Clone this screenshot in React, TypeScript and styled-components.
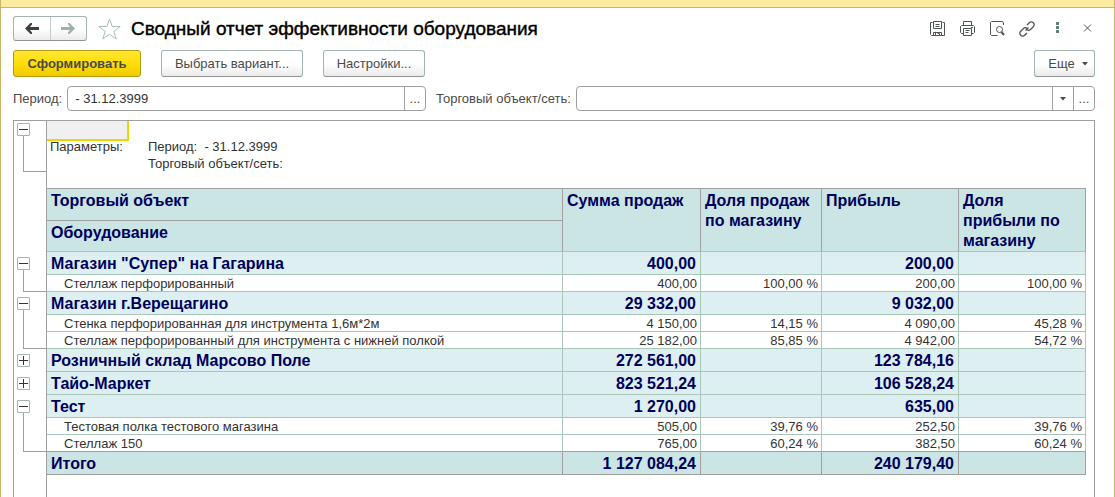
import React from "react";
import styled, { createGlobalStyle, css } from "styled-components";

const line = "#a0a0a0";
const grid = "#a9c6bb";
const ROW = { group: 23, item: 17 };

const GlobalStyle = createGlobalStyle`
  *, *::after { box-sizing: border-box; }
  body { margin: 0; background: #fff; }
  body, button, input, table { font-family: "Liberation Sans", Arial, sans-serif; font-size: 13px; color: #4a4a4a; }
  button { cursor: pointer; }
`;

const Frame = styled.div`
  min-height: 100vh;
  display: flex;
  flex-direction: column;
  border: solid #c8b668;
  border-width: 0 1px;
`;

const Strip = styled.div`
  height: 8px;
  background: #fdeb9f;
  border-bottom: 1px solid #c8b668;
`;

const Content = styled.main`
  flex: 1;
  display: flex;
  flex-direction: column;
  padding: 8px 19px 0 12px;
`;

const TitleBar = styled.header`
  display: flex;
  align-items: center;
  height: 25px;
`;

const face = css`
  background: linear-gradient(#fff 50%, #ebebeb);
  border: 1px solid #a3b5b0;
  border-bottom-color: #929292;
  border-radius: 3px;
`;

const History = styled.div`
  ${face}
  display: flex;
  width: 74px;
  height: 25px;
`;

const HistoryButton = styled.button`
  flex: 1;
  display: grid;
  place-items: center;
  padding: 0;
  border: 0;
  background: none;
  & + & { border-left: 1px solid #c3cdca; }
`;

const Star = styled.button`
  display: grid;
  margin-left: 10px;
  padding: 0;
  border: 0;
  background: none;
`;

const Title = styled.h1`
  flex: 1;
  margin: 0 0 0 9px;
  font-size: 19px;
  font-weight: 400;
  line-height: 24px;
  color: #000;
  -webkit-text-stroke: 0.4px #000;
  white-space: nowrap;
`;

const Tools = styled.div`
  display: flex;
  gap: 14px;
`;

const Tool = styled.button`
  display: grid;
  place-items: center;
  width: 16px;
  height: 16px;
  padding: 0;
  border: 0;
  background: none;
`;

const Commands = styled.div`
  display: flex;
  gap: 20px;
  margin-top: 9px;
`;

const Command = styled.button<{ $width: number; $primary?: boolean; $end?: boolean }>`
  ${face}
  display: flex;
  align-items: center;
  justify-content: center;
  gap: 7px;
  width: ${(p) => p.$width}px;
  height: 27px;
  padding: 0;
  white-space: nowrap;
  ${(p) => p.$end && "margin-left: auto; padding-left: 7px;"}
  ${(p) =>
    p.$primary &&
    css`
      background: linear-gradient(#ffe731, #ffde06 50%, #efcb00);
      border-color: #b79a12;
      font-weight: 700;
    `}
`;

const Filters = styled.div`
  display: flex;
  align-items: center;
  gap: 10px;
  margin-top: 9px;
`;

const Filter = styled.div<{ $share: number }>`
  flex: ${(p) => p.$share} 1 0;
  display: flex;
  align-items: center;
  gap: 5px;
  white-space: nowrap;
`;

const Field = styled.div`
  flex: 1;
  display: flex;
  height: 25px;
  border: 1px solid ${line};
  border-radius: 4px;
  overflow: hidden;
`;

const Input = styled.input`
  flex: 1;
  min-width: 0;
  padding: 0 7px;
  border: 0;
  outline: 0;
  background: none;
  color: #333;
`;

const FieldButton = styled.button`
  display: grid;
  place-items: center;
  width: 21px;
  padding: 0;
  border: 0;
  border-left: 1px solid ${line};
  background: none;
`;

const Sheet = styled.section`
  flex: 1;
  display: flex;
  margin-top: 9px;
  border: solid ${line};
  border-width: 1px 1px 0;
`;

const Gutter = styled.div`
  width: 33px;
  border-right: 1px solid ${line};
`;

const Outline = styled.div<{ $height: number; $top: number; $after?: number }>`
  display: flex;
  flex-direction: column;
  height: ${(p) => p.$height}px;
  padding-top: ${(p) => p.$top}px;
  margin-bottom: ${(p) => p.$after ?? 0}px;
`;

const Toggle = styled.button`
  flex: none;
  display: grid;
  place-items: center;
  width: 13px;
  height: 13px;
  margin-left: 3px;
  padding: 0;
  border: 1px solid #a9b3b0;
  border-radius: 1px;
  background: #fff;
`;

const Bracket = styled.div`
  flex: 1;
  margin-left: 9px;
  border: solid ${line};
  border-width: 0 0 1px 1px;
`;

const Report = styled.div`
  flex: 1;
  min-width: 0;
  padding-right: 8px;
`;

const ActiveCell = styled.div`
  position: relative;
  height: 17px;
  &::after {
    content: "";
    position: absolute;
    top: 0;
    left: 0;
    width: 82px;
    height: 20px;
    background: #f0f0f0;
    border: solid #f2d500;
    border-width: 0 2px 2px 0;
  }
`;

const Params = styled.div`
  display: grid;
  grid-template-columns: 98px auto;
  padding: 0 0 16px 3px;
  line-height: 17px;
  color: #333;
  white-space: pre;
`;

const Table = styled.table`
  width: 100%;
  table-layout: fixed;
  border-collapse: separate;
  border-spacing: 0;
  border-top: 1px solid ${line};
`;

const Col = styled.col<{ $width?: number }>`
  width: ${(p) => (p.$width ? `${p.$width}px` : "auto")};
`;

const Head = styled.th<{ $height?: number; $last?: boolean }>`
  height: ${(p) => (p.$height ? `${p.$height}px` : "auto")};
  padding: 2px 8px 0 4px;
  vertical-align: top;
  text-align: left;
  font-size: 16px;
  line-height: 20px;
  color: #00005c;
  background: #cbe4e4;
  border-right: 1px solid ${line};
  border-bottom: 1px solid ${(p) => (p.$last ? grid : line)};
  &[rowspan] { padding-bottom: 0; }
`;

type Kind = "group" | "item" | "total";

const Row = styled.tr<{ $kind: Kind; $closing?: boolean }>`
  td, th {
    height: ${(p) => (p.$kind === "item" ? ROW.item : ROW.group)}px;
    padding: 2px 4px 0;
    text-align: right;
    white-space: nowrap;
    font-weight: 700;
    font-size: 16px;
    line-height: 20px;
    color: #00005c;
    background: ${(p) => (p.$kind === "total" ? "#cbe4e4" : "#ddeff1")};
    border: solid ${(p) => (p.$kind === "total" ? line : grid)};
    border-width: 0 1px 1px 0;
  }
  th { text-align: left; }
  ${(p) =>
    p.$kind === "item" &&
    css`
      td, th {
        padding: 1px 3px 0;
        font-weight: 400;
        font-size: 13px;
        line-height: 15px;
        color: #333;
        background: #fff;
      }
      th { padding-left: 17px; }
    `}
  ${(p) => p.$closing && css`td, th { border-bottom-color: ${line}; }`}
`;

type Line = [string, string, string, string, string];
interface Group { total: Line; items: Line[]; }

const groups: Group[] = [
  {
    total: ['Магазин "Супер" на Гагарина', "400,00", "", "200,00", ""],
    items: [["Стеллаж перфорированный", "400,00", "100,00 %", "200,00", "100,00 %"]],
  },
  {
    total: ["Магазин г.Верещагино", "29 332,00", "", "9 032,00", ""],
    items: [
      ["Стенка перфорированная для инструмента 1,6м*2м", "4 150,00", "14,15 %", "4 090,00", "45,28 %"],
      ["Стеллаж перфорированный для инструмента с нижней полкой", "25 182,00", "85,85 %", "4 942,00", "54,72 %"],
    ],
  },
  { total: ["Розничный склад Марсово Поле", "272 561,00", "", "123 784,16", ""], items: [] },
  { total: ["Тайо-Маркет", "823 521,24", "", "106 528,24", ""], items: [] },
  {
    total: ["Тест", "1 270,00", "", "635,00", ""],
    items: [
      ["Тестовая полка тестового магазина", "505,00", "39,76 %", "252,50", "39,76 %"],
      ["Стеллаж 150", "765,00", "60,24 %", "382,50", "60,24 %"],
    ],
  },
];

const Arrow = ({ color, flip }: { color: string; flip?: boolean }) => (
  <svg width="14" height="11" viewBox="0 0 14 11" fill={color}>
    {flip ? (
      <path d="M14 5.500 8.500 0H7v1.500L9 4H0v3h9L7 9.500V11h1.500z" />
    ) : (
      <path d="M0 5.500 5.500 0H7v1.500L5 4h9v3H5l2 2.500V11H5.500z" />
    )}
  </svg>
);

const Caret = () => (
  <svg width="6" height="4" viewBox="0 0 6 4"><path d="M0 0h6L3 3.500z" fill="#4a4a4a" /></svg>
);

const Sign = ({ plus }: { plus?: boolean }) => (
  <svg width="9" height="9" viewBox="0 0 9 9" stroke="#333">
    <path d={plus ? "M0 4.500h9M4.500 0v9" : "M0 4.500h9"} />
  </svg>
);

const Glyph = ({ children }: { children: React.ReactNode }) => (
  <svg width="16" height="16" viewBox="0 0 16 16" fill="none" stroke="#4d5553">{children}</svg>
);

const Cells = ({ values }: { values: Line }) => (
  <>
    <th scope="row">{values[0]}</th>
    {values.slice(1).map((v, i) => <td key={i}>{v}</td>)}
  </>
);

export default function App() {
  return (
    <>
      <GlobalStyle />
      <Frame>
        <Strip />
        <Content>
          <TitleBar>
            <History>
              <HistoryButton aria-label="Назад"><Arrow color="#404040" /></HistoryButton>
              <HistoryButton aria-label="Вперед"><Arrow color="#9fb0aa" flip /></HistoryButton>
            </History>
            <Star aria-label="В избранное">
              <svg width="25" height="24" viewBox="0 0 25 24" fill="#fff" stroke="#a9bdb8">
                <path d="m12.500 2 2.700 7.500h8l-6.400 4.900 2.400 7.600-6.700-4.700L5.800 22l2.400-7.600-6.400-4.900h8z" />
              </svg>
            </Star>
            <Title>Сводный отчет эффективности оборудования</Title>
            <Tools>
              <Tool aria-label="Сохранить">
                <Glyph>
                  <path d="M1.500 1.500v12l1 1h13v-13h-2M1.500 1.500h2M4.500 .5v7h8v-7zM6.500 3.500h4M6.500 5.500h4M4.500 14.500v-3h8v3M6.500 12v2M8.500 12.500h2v2" />
                </Glyph>
              </Tool>
              <Tool aria-label="Печать">
                <Glyph>
                  <path d="M4.500 4.500v-4h8v4M4.500 12.500h-2l-1-1v-6l1-1h12l1 1v6l-1 1h-2M4.500 7.500h8v7h-8zM6.500 9.500h4M6.500 11.500h3M12 6.500h2" />
                </Glyph>
              </Tool>
              <Tool aria-label="Просмотр">
                <Glyph>
                  <path d="M14.500 4V2l-1-1.500H2.500l-1 1v12l1 1h6" />
                  <circle cx="10.500" cy="8.500" r="3" />
                  <path d="m12.500 11 2.500 3" strokeWidth="2" />
                </Glyph>
              </Tool>
              <Tool aria-label="Ссылка">
                <Glyph>
                  <path strokeWidth="1.300" d="m8 4 2.300-2.300a2.700 2.700 0 0 1 4 0 2.700 2.700 0 0 1 0 4L11.500 8.500a2.700 2.700 0 0 1-3.500.3M8 12l-2.300 2.300a2.700 2.700 0 0 1-4 0 2.700 2.700 0 0 1 0-4L4.500 7.500A2.700 2.700 0 0 1 8 7.200M6.500 9.500l3-3" />
                </Glyph>
              </Tool>
              <Tool aria-label="Меню">
                <svg width="16" height="16" viewBox="0 0 16 16" fill="#5f7f75">
                  <path d="M7 1h3v3H7zM7 5h3v3H7zM7 9h3v3H7z" />
                </svg>
              </Tool>
              <Tool aria-label="Закрыть">
                <Glyph><path d="m5 3.500 7 7M12 3.500l-7 7" /></Glyph>
              </Tool>
            </Tools>
          </TitleBar>

          <Commands>
            <Command $width={128} $primary>Сформировать</Command>
            <Command $width={142}>Выбрать вариант...</Command>
            <Command $width={102}>Настройки...</Command>
            <Command $width={61} $end>Еще <Caret /></Command>
          </Commands>

          <Filters>
            <Filter $share={413}>
              <label htmlFor="period">Период:</label>
              <Field>
                <Input id="period" defaultValue="- 31.12.3999" />
                <FieldButton aria-label="Выбрать период">...</FieldButton>
              </Field>
            </Filter>
            <Filter $share={659}>
              <label htmlFor="outlet">Торговый объект/сеть:</label>
              <Field>
                <Input id="outlet" />
                <FieldButton aria-label="Открыть список"><Caret /></FieldButton>
                <FieldButton aria-label="Выбрать объект">...</FieldButton>
              </Field>
            </Filter>
          </Filters>

          <Sheet>
            <Gutter>
              <Outline $height={51} $top={2} $after={80}>
                <Toggle aria-label="Свернуть"><Sign /></Toggle>
                <Bracket />
              </Outline>
              {groups.map((g) => (
                <Outline key={g.total[0]} $height={ROW.group + ROW.item * g.items.length} $top={5}>
                  <Toggle aria-label={g.items.length ? "Свернуть" : "Развернуть"}>
                    <Sign plus={!g.items.length} />
                  </Toggle>
                  {g.items.length > 0 && <Bracket />}
                </Outline>
              ))}
            </Gutter>
            <Report>
              <ActiveCell />
              <Params>
                <span>Параметры:</span>
                <span>Период:  - 31.12.3999</span>
                <span />
                <span>Торговый объект/сеть:</span>
              </Params>
              <Table>
                <colgroup>
                  <Col /><Col $width={138} /><Col $width={121} /><Col $width={137} /><Col $width={127} />
                </colgroup>
                <thead>
                  <tr>
                    <Head $height={32}>Торговый объект</Head>
                    <Head rowSpan={2} $last>Сумма продаж</Head>
                    <Head rowSpan={2} $last>Доля продаж по магазину</Head>
                    <Head rowSpan={2} $last>Прибыль</Head>
                    <Head rowSpan={2} $last>Доля прибыли по магазину</Head>
                  </tr>
                  <tr><Head $height={31} $last>Оборудование</Head></tr>
                </thead>
                <tbody>
                  {groups.map((g, gi) => (
                    <React.Fragment key={g.total[0]}>
                      <Row $kind="group"><Cells values={g.total} /></Row>
                      {g.items.map((item, i) => (
                        <Row key={item[0]} $kind="item" $closing={gi === groups.length - 1 && i === g.items.length - 1}>
                          <Cells values={item} />
                        </Row>
                      ))}
                    </React.Fragment>
                  ))}
                  <Row $kind="total"><Cells values={["Итого", "1 127 084,24", "", "240 179,40", ""]} /></Row>
                </tbody>
              </Table>
            </Report>
          </Sheet>
        </Content>
      </Frame>
    </>
  );
}
